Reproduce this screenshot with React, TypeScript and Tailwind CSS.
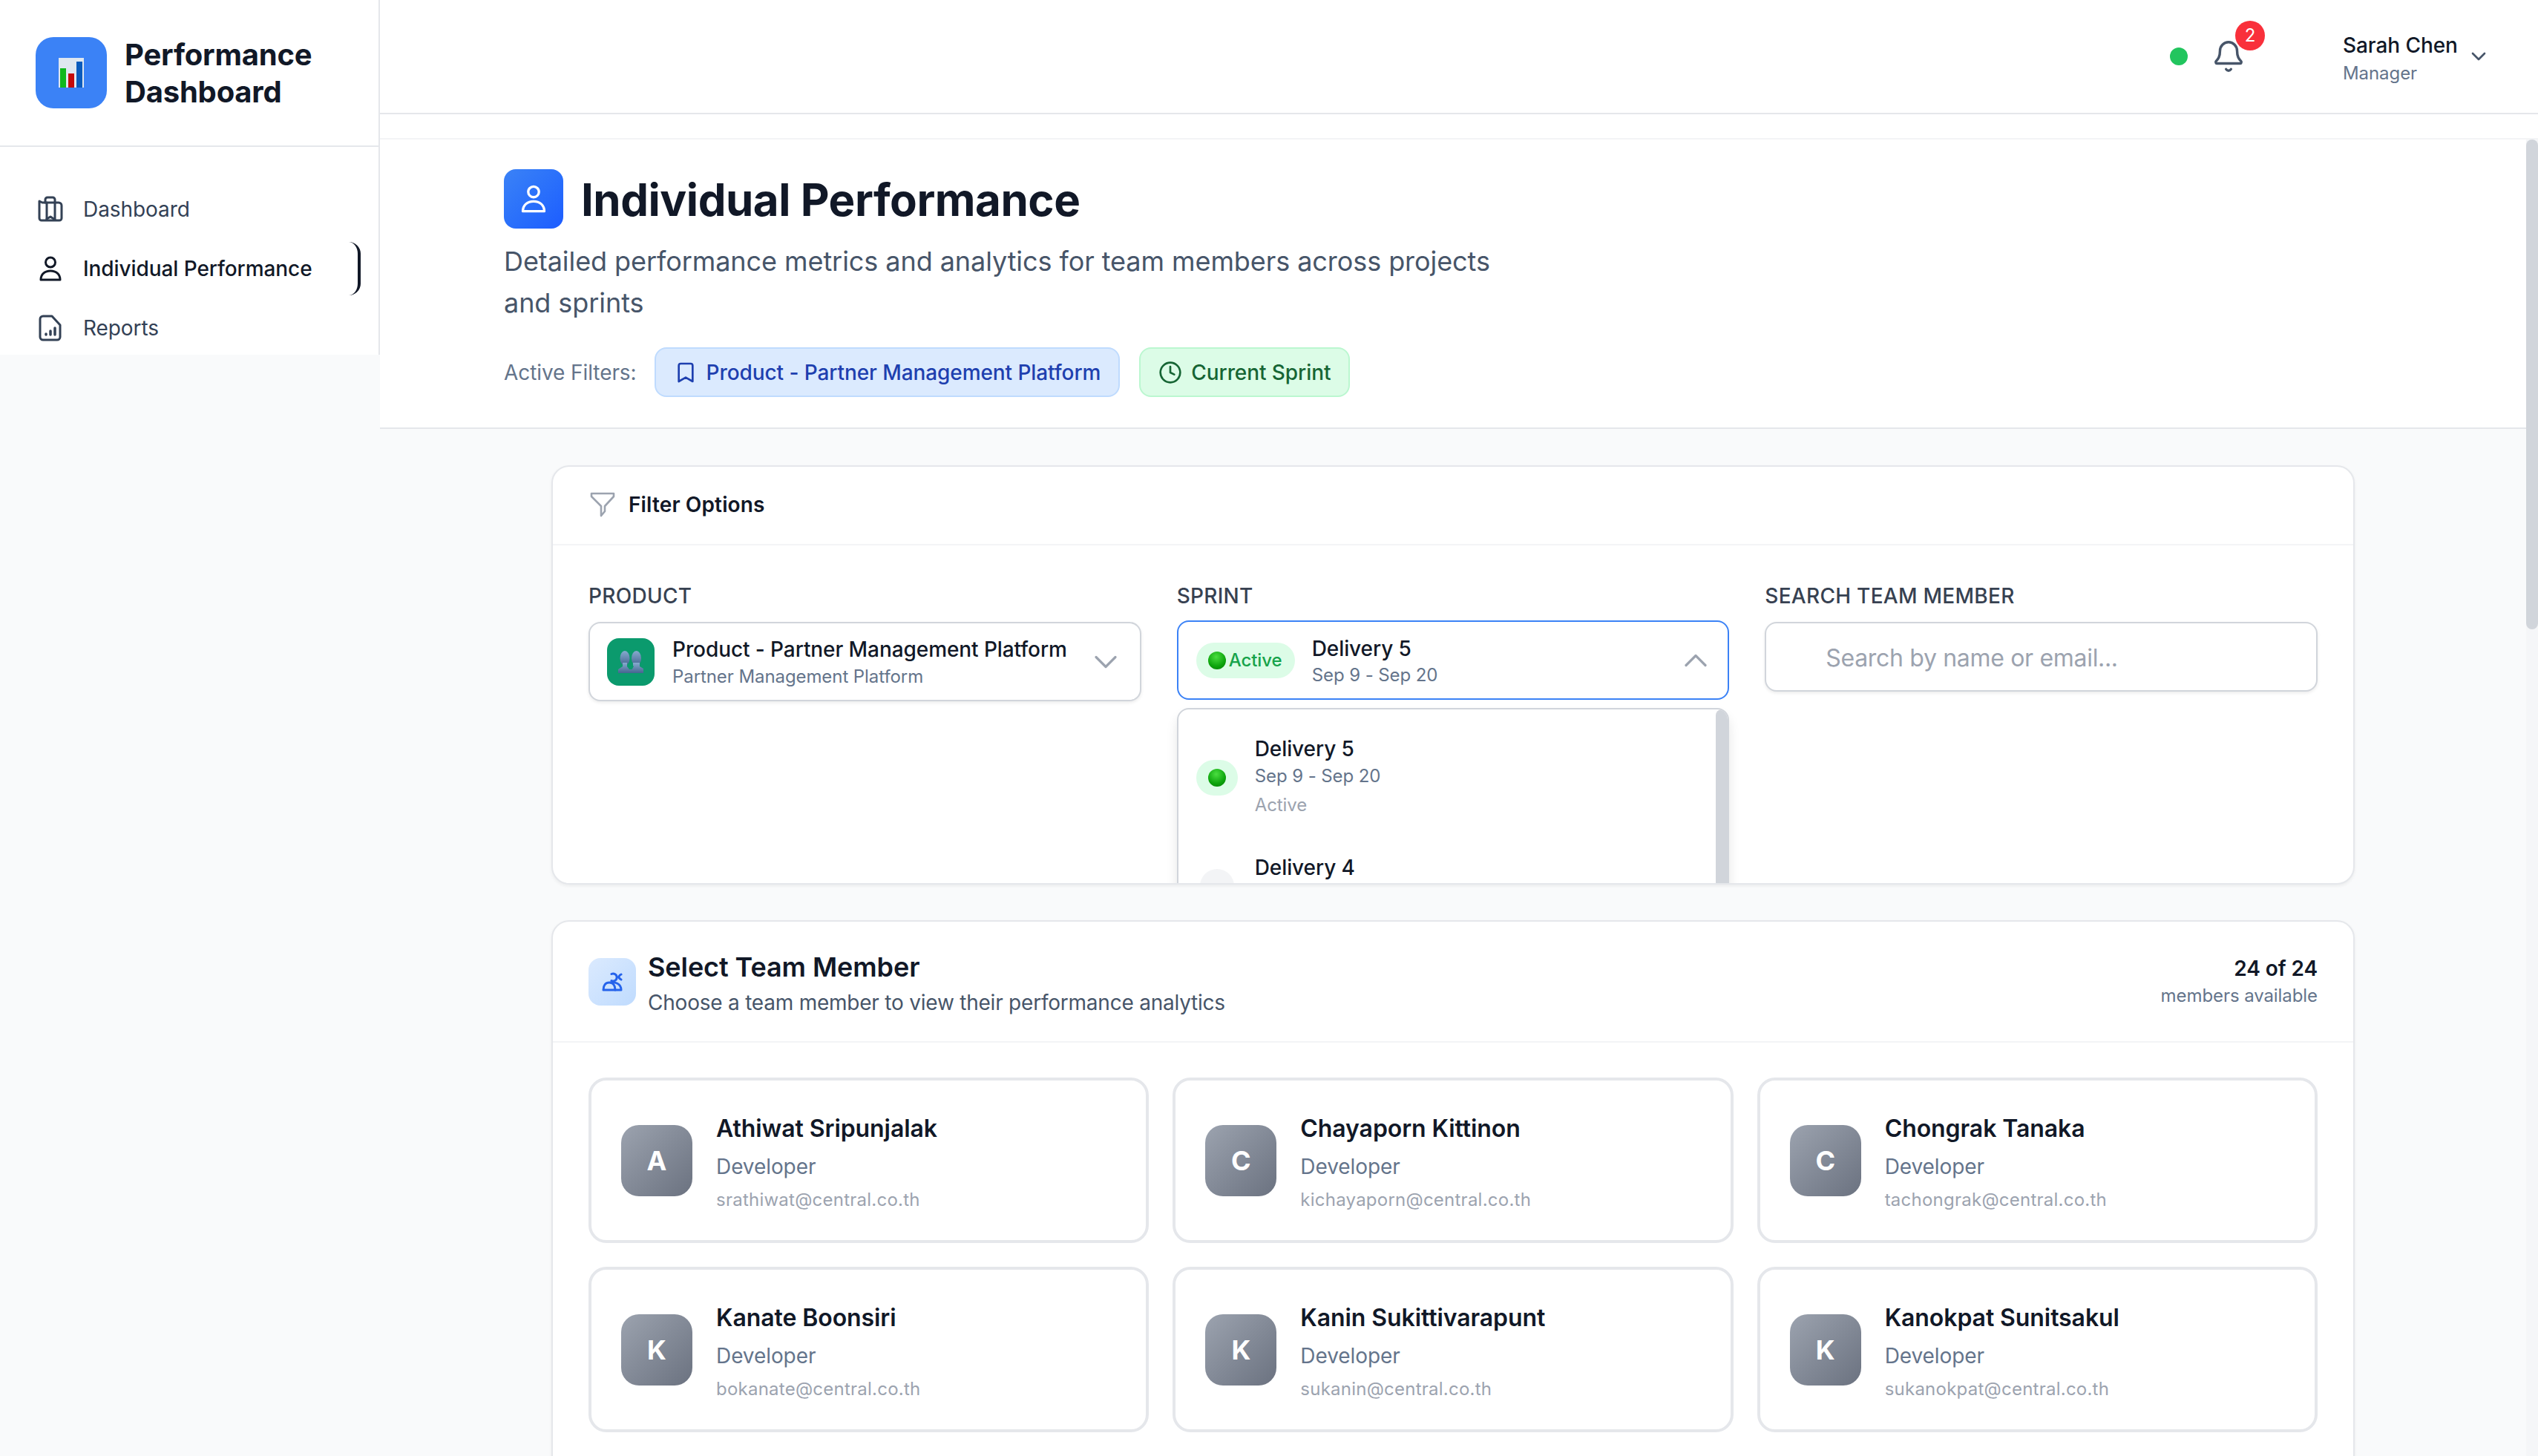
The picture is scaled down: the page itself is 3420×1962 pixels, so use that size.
import React from "react";
import { Bell, Bookmark, ChevronDown, ChevronUp, Clock } from "lucide-react";

const PersonIcon = ({ className }: { className?: string }) => (
  <svg viewBox="0 0 36 36" fill="none" stroke="currentColor" strokeWidth="3" strokeLinejoin="round" className={className}>
    <circle cx="18" cy="9.5" r="6.5" />
    <path d="M5 33c0-7.5 5.5-12 13-12s13 4.500 13 12z" />
  </svg>
);

const DashboardIcon = () => (
  <svg viewBox="0 0 36 36" fill="none" stroke="#334155" strokeWidth="3" strokeLinejoin="round" strokeLinecap="round" className="h-[36px] w-[36px]">
    <path d="M3 7l4 2h22a4 4 0 0 1 4 4v17a3 3 0 0 1-3 3H6a3 3 0 0 1-3-3z" />
    <path d="M11 9V5a3 3 0 0 1 3-3h7a3 3 0 0 1 3 3v4" />
    <path d="M13 9v23M24 9v23" />
    <path d="M13 31l5-3 6 4" />
  </svg>
);

const ReportIcon = () => (
  <svg viewBox="0 0 36 36" fill="none" stroke="#334155" strokeWidth="3" strokeLinejoin="round" strokeLinecap="round" className="h-[36px] w-[36px]">
    <path d="M8 2h12l11 12v16a4 4 0 0 1-4 4H8a4 4 0 0 1-4-4V6a4 4 0 0 1 4-4z" />
    <path d="M12 27v-1M18 27v-5M24 27v-9" strokeWidth="3.500" />
  </svg>
);

const LogoChart = () => (
  <svg viewBox="0 0 34 40" className="h-[40px] w-[34px]">
    <rect width="34" height="40" fill="#dfe7f0" />
    <rect x="2" y="14" width="8" height="26" fill="#0fb81c" />
    <rect x="13" y="21" width="8" height="19" fill="#c40a0a" />
    <rect x="24" y="5" width="8" height="35" fill="#0a5bbd" />
  </svg>
);

const TeamEmoji = () => (
  <svg viewBox="0 0 36 30" className="h-[30px] w-[36px]">
    <defs>
      <linearGradient id="silhouette" x1="0" y1="0" x2="0" y2="1">
        <stop offset="0" stopColor="#86abcf" />
        <stop offset="1" stopColor="#45648f" />
      </linearGradient>
    </defs>
    <ellipse cx="10" cy="10" rx="6.500" ry="10" fill="url(#silhouette)" />
    <ellipse cx="25.500" cy="10" rx="6.500" ry="10" fill="url(#silhouette)" />
    <path d="M7 16h6v5l7 4 1-4v-5h9v5l5 3v6H1v-5l6-4z" fill="url(#silhouette)" />
    <path d="M14 20l3.500 3 3.500-3 1 1-3 4h-3l-3-4z" fill="#0b9a6d" />
  </svg>
);

const GreenBall = () => (
  <span className="block h-[24px] w-[24px] shrink-0 rounded-full bg-[radial-gradient(circle_at_45%_30%,#4ade40,#0ca30c_60%,#067a06)]" />
);

const TeamIcon = () => (
  <svg viewBox="0 0 28 26" fill="none" stroke="#2563eb" strokeWidth="3" strokeLinejoin="round" strokeLinecap="round" className="h-[26px] w-[28px]">
    <path d="M2 24c0-6 3-10 8-10s8 4 8 10z" />
    <path d="M12 14c5-1 14 1 14 10h-8" />
    <path d="M13 2.500a5 5 0 1 1 0 9M26 3c-2 1-3 2-3 3.500s1 2.500 3 3.500" />
  </svg>
);

const NavItem = ({ label, icon, active }: { label: string; icon: React.ReactNode; active?: boolean }) => (
  <div className={`flex h-[72px] items-center gap-[26px] rounded-[16px] pl-[26px] text-[28px] ${active ? "border-r-[4px] border-[#111827] font-medium text-[#111827]" : "text-[#334155]"}`}>
    {icon}
    <span>{label}</span>
  </div>
);

const members = [
  ["A", "Athiwat Sripunjalak", "srathiwat@central.co.th"],
  ["C", "Chayaporn Kittinon", "kichayaporn@central.co.th"],
  ["C", "Chongrak Tanaka", "tachongrak@central.co.th"],
  ["K", "Kanate Boonsiri", "bokanate@central.co.th"],
  ["K", "Kanin Sukittivarapunt", "sukanin@central.co.th"],
  ["K", "Kanokpat Sunitsakul", "sukanokpat@central.co.th"],
];

export default function App() {
  return (
    <div className="flex h-[1962px] w-[3420px] overflow-hidden bg-[#f9fafb] font-['Inter','Liberation_Sans',sans-serif] tracking-[-0.005em] text-[#111827]">
      <aside className="h-[478px] w-[512px] shrink-0 border-r-[2px] border-[#e5e7eb] bg-white">
        <div className="flex h-[198px] items-center gap-[24px] border-b-[2px] border-[#e5e7eb] pl-[48px]">
          <div className="flex h-[96px] w-[96px] items-center justify-center rounded-[24px] bg-[#3b82f6]">
            <LogoChart />
          </div>
          <div className="pt-[2px] text-[40px] font-bold leading-[50px] tracking-[-0.005em]">
            Performance
            <br />
            Dashboard
          </div>
        </div>
        <nav className="flex flex-col gap-[8px] pl-[24px] pr-[24px] pt-[48px]">
          <NavItem label="Dashboard" icon={<DashboardIcon />} />
          <NavItem label="Individual Performance" active icon={<PersonIcon className="h-[36px] w-[36px] text-[#111827]" />} />
          <NavItem label="Reports" icon={<ReportIcon />} />
        </nav>
      </aside>

      <div className="flex min-w-0 flex-1 flex-col">
        <header className="flex h-[154px] shrink-0 items-center justify-end border-b-[2px] border-[#e5e7eb] bg-white pr-[64px]">
          <span className="h-[24px] w-[24px] rounded-full bg-[#22c55e]" />
          <div className="relative ml-[32px] h-[46px] w-[46px]">
            <Bell className="h-[46px] w-[46px] text-[#475569]" strokeWidth={1.8} />
            <span className="absolute left-[32px] top-[-25px] flex h-[40px] w-[40px] items-center justify-center rounded-full bg-[#f9303b] text-[24px] text-white">2</span>
          </div>
          <div className="ml-[131px] w-[160px] pt-[4px]">
            <div className="text-[28px] font-medium leading-[40px]">Sarah Chen</div>
            <div className="text-[24px] leading-[35px] text-[#64748b]">Manager</div>
          </div>
          <ChevronDown className="ml-[7px] h-[32px] w-[32px] text-[#475569]" strokeWidth={2} />
        </header>
        <div className="h-[34px] shrink-0 border-b-[2px] border-[#f3f4f6] bg-white" />

        <div className="flex min-h-0 flex-1">
          <main className="min-w-0 flex-1">
            <section className="h-[390px] border-b-[2px] border-[#e5e7eb] bg-white pl-[167px] pt-[40px]">
              <div className="flex h-[80px] items-center gap-[24px]">
                <div className="flex h-[80px] w-[80px] items-center justify-center rounded-[16px] bg-gradient-to-br from-[#3b82f6] to-[#1d5cff]">
                  <PersonIcon className="h-[40px] w-[40px] text-white" />
                </div>
                <h1 className="pt-[2px] text-[60px] font-bold leading-[80px] tracking-[-0.008em] text-[#111827]">Individual Performance</h1>
              </div>
              <p className="mt-[16px] w-[1344px] text-[36px] leading-[56px] tracking-[-0.002em] text-[#475569]">
                Detailed performance metrics and analytics for team members across projects and sprints
              </p>
              <div className="mt-[32px] flex items-center">
                <span className="mr-[24px] text-[28px] text-[#64748b]">Active Filters:</span>
                <span className="flex h-[67px] items-center gap-[12px] rounded-[16px] border-[2px] border-[#bfdbfe] bg-[#dbeafe] px-[24px] text-[28px] font-medium text-[#1e40af]">
                  <Bookmark className="h-[32px] w-[32px]" strokeWidth={2} />
                  Product - Partner Management Platform
                </span>
                <span className="ml-[26px] flex h-[67px] items-center gap-[12px] rounded-[16px] border-[2px] border-[#bbf7d0] bg-[#dcfce7] px-[24px] text-[28px] font-medium text-[#166534]">
                  <Clock className="h-[32px] w-[32px]" strokeWidth={2} />
                  Current Sprint
                </span>
              </div>
            </section>

            <div className="flex flex-col gap-[48px] px-[231px] pt-[49px]">
              <section className="h-[565px] overflow-hidden rounded-[24px] border-[2px] border-[#e5e7eb] bg-white shadow-[0_2px_4px_rgba(0,0,0,0.06)]">
                <div className="flex h-[106px] items-center gap-[18px] border-b-[2px] border-[#f3f4f6] pb-[2px] pl-[50px]">
                  <svg viewBox="0 0 34 34" fill="none" stroke="#9ca3af" strokeWidth="2.600" strokeLinejoin="round" className="h-[34px] w-[34px]">
                    <path d="M2 2h30v4L20 19v7l-5 6v-13L2 6z" />
                  </svg>
                  <span className="text-[28px] font-semibold tracking-[0.005em]">Filter Options</span>
                </div>
                <div className="grid grid-cols-3 gap-[48px] px-[48px] pt-[48px]">
                  <div>
                    <div className="mb-[15px] text-[28px] font-medium uppercase leading-[40px] tracking-[0.01em] text-[#374151]">Product</div>
                    <div className="flex h-[107px] items-center rounded-[16px] border-[2px] border-[#d1d5db] bg-white pl-[23px] pr-[20px] shadow-[0_2px_4px_rgba(0,0,0,0.08)]">
                      <div className="flex h-[64px] w-[64px] shrink-0 items-center justify-center rounded-[16px] bg-[#0b9a6d]">
                        <TeamEmoji />
                      </div>
                      <div className="ml-[24px] flex-1 pt-[2px]">
                        <div className="text-[28px] font-medium leading-[38px]">Product - Partner Management Platform</div>
                        <div className="text-[24px] leading-[36px] text-[#64748b]">Partner Management Platform</div>
                      </div>
                      <ChevronDown className="h-[52px] w-[52px] text-[#9ca3af]" strokeWidth={1.5} />
                    </div>
                  </div>

                  <div>
                    <div className="mb-[13px] text-[28px] font-medium uppercase leading-[40px] tracking-[0.01em] text-[#374151]">Sprint</div>
                    <div className="flex h-[107px] items-center rounded-[16px] border-[2px] border-[#3b82f6] bg-white pl-[24px] pr-[17px]">
                      <span className="flex h-[48px] w-[133px] shrink-0 items-center gap-[4px] rounded-full bg-[#dcfce7] pl-[16px] text-[24px] font-medium text-[#16a34a]">
                        <GreenBall />
                        Active
                      </span>
                      <div className="ml-[23px] flex-1 pt-[2px]">
                        <div className="text-[28px] font-medium leading-[38px]">Delivery 5</div>
                        <div className="text-[24px] leading-[34px] text-[#64748b]">Sep 9 - Sep 20</div>
                      </div>
                      <ChevronUp className="h-[52px] w-[52px] text-[#9ca3af]" strokeWidth={1.5} />
                    </div>
                    <div className="mt-[11px] flex h-[300px] overflow-hidden rounded-[16px] border-[2px] border-[#d1d5db] bg-white shadow-[0_10px_15px_rgba(0,0,0,0.1)]">
                      <div className="flex-1 pl-[24px]">
                        <div className="flex items-center pt-[34px]">
                          <span className="flex h-[48px] w-[56px] items-center justify-center rounded-full bg-[#dcfce7]">
                            <GreenBall />
                          </span>
                          <div className="ml-[23px]">
                            <div className="text-[28px] font-medium leading-[38px]">Delivery 5</div>
                            <div className="text-[24px] leading-[36px] text-[#64748b]">Sep 9 - Sep 20</div>
                            <div className="text-[24px] leading-[42px] text-[#9ca3af]">Active</div>
                          </div>
                        </div>
                        <div className="mt-[44px] flex">
                          <span className="ml-[5px] mt-[21px] h-[48px] w-[46px] rounded-full bg-[#f3f4f6]" />
                          <div className="ml-[28px] text-[28px] font-medium leading-[38px]">Delivery 4</div>
                        </div>
                      </div>
                      <div className="w-[16px] rounded-t-[8px] bg-[#d1d5db]" />
                    </div>
                  </div>

                  <div>
                    <div className="mb-[15px] text-[28px] font-medium uppercase leading-[40px] tracking-[0.01em] text-[#374151]">Search Team Member</div>
                    <div className="flex h-[94px] items-center rounded-[16px] border-[2px] border-[#d1d5db] bg-white pl-[80px] pt-[3px] text-[32px] tracking-[-0.01em] text-[#9ca3af] shadow-[0_2px_4px_rgba(0,0,0,0.08)]">
                      Search by name or email...
                    </div>
                  </div>
                </div>
              </section>

              <section className="h-[900px] rounded-[24px] border-[2px] border-[#e5e7eb] bg-white shadow-[0_2px_4px_rgba(0,0,0,0.06)]">
                <div className="flex h-[163px] items-center justify-between border-b-[2px] border-[#f3f4f6] px-[48px]">
                  <div className="flex items-center gap-[16px]">
                    <div className="flex h-[64px] w-[64px] items-center justify-center rounded-[16px] bg-gradient-to-br from-[#dbeafe] to-[#bfdbfe]">
                      <TeamIcon />
                    </div>
                    <div>
                      <div className="text-[36px] font-semibold leading-[56px]">Select Team Member</div>
                      <div className="text-[28px] leading-[40px] tracking-[-0.008em] text-[#475569]">Choose a team member to view their performance analytics</div>
                    </div>
                  </div>
                  <div className="text-right">
                    <div className="text-[28px] font-semibold leading-[38px]">24 of 24</div>
                    <div className="text-[24px] leading-[36px] text-[#64748b]">members available</div>
                  </div>
                </div>
                <div className="grid grid-cols-3 gap-[32px] px-[48px] pt-[47px]">
                  {members.map(([letter, name, email]) => (
                    <div key={email} className="flex h-[223px] items-center rounded-[24px] border-[4px] border-[#e5e7eb] bg-white pl-[40px]">
                      <div className="flex h-[96px] w-[96px] shrink-0 items-center justify-center rounded-[24px] bg-gradient-to-br from-[#9ca3af] to-[#6b7280] text-[36px] font-bold text-white">
                        {letter}
                      </div>
                      <div className="ml-[32px] pt-[2px]">
                        <div className="text-[32px] font-semibold leading-[48px]">{name}</div>
                        <div className="mt-[7px] text-[28px] leading-[40px] text-[#64748b]">Developer</div>
                        <div className="mt-[9px] text-[24px] leading-[32px] tracking-[0.01em] text-[#9ca3af]">{email}</div>
                      </div>
                    </div>
                  ))}
                </div>
              </section>
            </div>
          </main>
          <div className="w-[16px] shrink-0 bg-[#f5f6f8]">
            <div className="h-[660px] rounded-full bg-[#d1d5db]" />
          </div>
        </div>
      </div>
    </div>
  );
}
